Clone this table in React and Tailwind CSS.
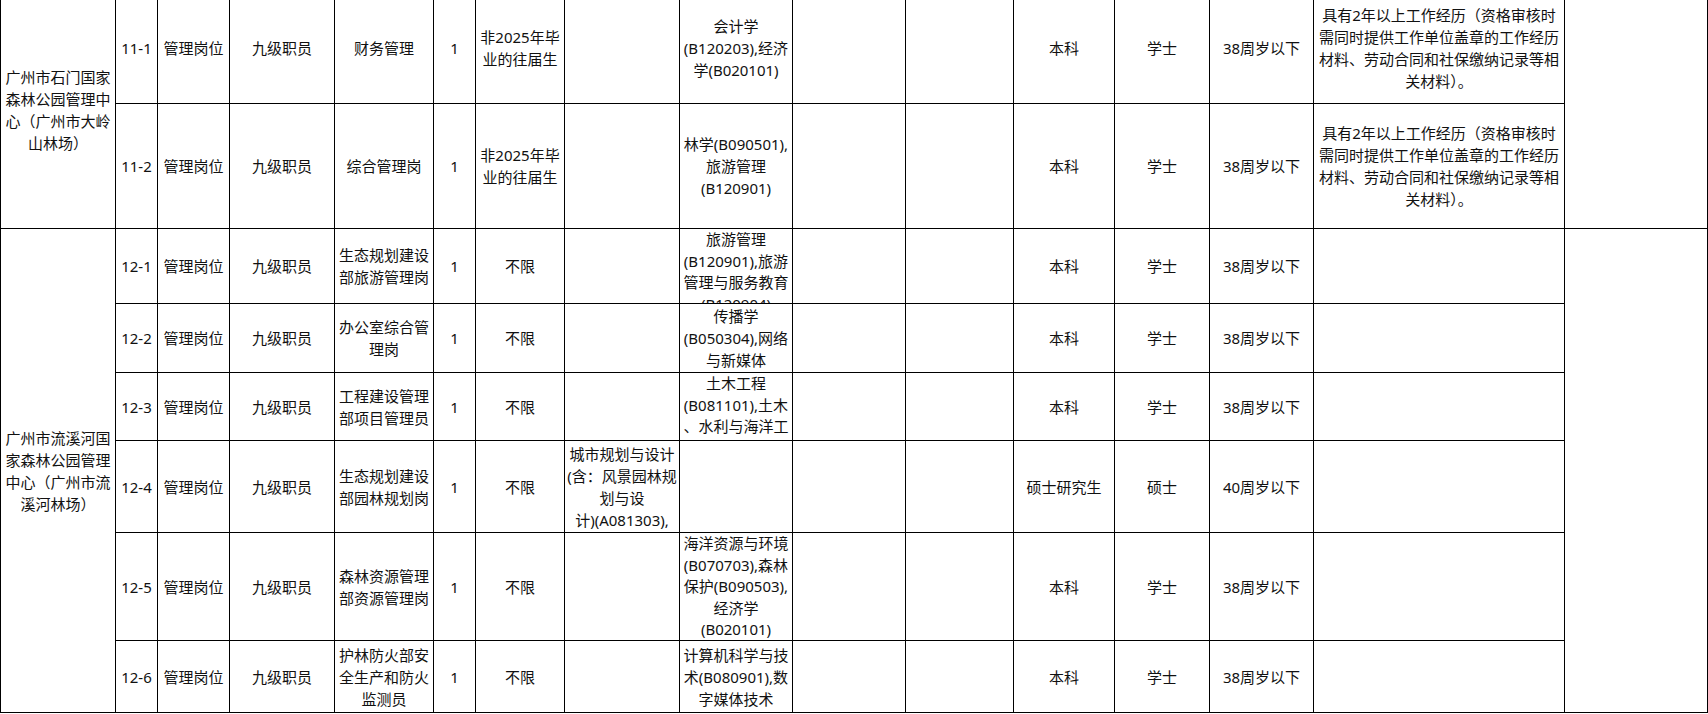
const REMARK = [
  "具有2年以上工作经历（资格审核时",
  "需同时提供工作单位盖章的工作经历",
  "材料、劳动合同和社保缴纳记录等相",
  "关材料）。",
];

const rows = [
  {
    code: "11-1",
    post: ["财务管理"],
    target: ["非2025年毕", "业的往届生"],
    grad: [],
    major: ["会计学", "(B120203),经济", "学(B020101)"],
    edu: "本科",
    degree: "学士",
    age: "38周岁以下",
    remark: REMARK,
  },
  {
    code: "11-2",
    post: ["综合管理岗"],
    target: ["非2025年毕", "业的往届生"],
    grad: [],
    major: ["林学(B090501),", "旅游管理", "(B120901)"],
    edu: "本科",
    degree: "学士",
    age: "38周岁以下",
    remark: REMARK,
  },
  {
    code: "12-1",
    post: ["生态规划建设", "部旅游管理岗"],
    target: ["不限"],
    grad: [],
    major: ["旅游管理", "(B120901),旅游", "管理与服务教育", "(B120904)"],
    top: true,
    edu: "本科",
    degree: "学士",
    age: "38周岁以下",
    remark: [],
  },
  {
    code: "12-2",
    post: ["办公室综合管", "理岗"],
    target: ["不限"],
    grad: [],
    major: ["传播学", "(B050304),网络", "与新媒体"],
    edu: "本科",
    degree: "学士",
    age: "38周岁以下",
    remark: [],
  },
  {
    code: "12-3",
    post: ["工程建设管理", "部项目管理员"],
    target: ["不限"],
    grad: [],
    major: ["土木工程", "(B081101),土木", "、水利与海洋工"],
    top: true,
    edu: "本科",
    degree: "学士",
    age: "38周岁以下",
    remark: [],
  },
  {
    code: "12-4",
    post: ["生态规划建设", "部园林规划岗"],
    target: ["不限"],
    grad: ["城市规划与设计", "(含：风景园林规", "划与设", "计)(A081303),"],
    major: [],
    edu: "硕士研究生",
    degree: "硕士",
    age: "40周岁以下",
    remark: [],
  },
  {
    code: "12-5",
    post: ["森林资源管理", "部资源管理岗"],
    target: ["不限"],
    grad: [],
    major: ["海洋资源与环境", "(B070703),森林", "保护(B090503),", "经济学", "(B020101)"],
    top: true,
    edu: "本科",
    degree: "学士",
    age: "38周岁以下",
    remark: [],
  },
  {
    code: "12-6",
    post: ["护林防火部安", "全生产和防火", "监测员"],
    target: ["不限"],
    grad: [],
    major: ["计算机科学与技", "术(B080901),数", "字媒体技术"],
    edu: "本科",
    degree: "学士",
    age: "38周岁以下",
    remark: [],
  },
];

// one table cell; lines are broken by hand the way the sheet shows them
const Cell = ({ lines = [], top = false, className = "" }) => (
  <div
    className={`bg-white overflow-hidden flex flex-col items-center text-center ${
      top ? "justify-start" : "justify-center"
    } ${className}`}
  >
    {lines.map((l, i) => (
      <div
        key={i}
        className={`whitespace-nowrap ${top ? "leading-[21.5px]" : "leading-[22px]"}`}
      >
        {l}
      </div>
    ))}
  </div>
);

export default function App() {
  return (
    <div className="w-[1708px] h-[714px] overflow-hidden bg-white">
      <div
        className="-mt-[9px] grid gap-px p-px bg-black text-[15px] text-[#111] grid-cols-[114px_41px_71px_104px_98px_41px_88px_114px_112px_112px_107px_100px_94px_103px_250px_142px] grid-rows-[111px_124px_74px_68px_67px_91px_107px_71px]"
        style={{ fontFamily: '"Noto Sans", "Noto Sans CJK SC", sans-serif' }}
      >
        {rows.map((r, i) => (
          <Row key={r.code} r={r} first={i === 0} third={i === 2} />
        ))}
      </div>
    </div>
  );
}

function Row({ r, first, third }) {
  return (
    <>
      {first && (
        <Cell
          className="row-span-2"
          lines={["广州市石门国家", "森林公园管理中", "心（广州市大岭", "山林场）"]}
        />
      )}
      {third && (
        <Cell
          className="row-span-6"
          lines={["广州市流溪河国", "家森林公园管理", "中心（广州市流", "溪河林场）"]}
        />
      )}
      <Cell lines={[r.code]} />
      <Cell lines={["管理岗位"]} />
      <Cell lines={["九级职员"]} />
      <Cell lines={r.post} />
      <Cell lines={["1"]} />
      <Cell lines={r.target} />
      <Cell lines={r.grad} />
      <Cell lines={r.major} top={r.top} />
      <Cell />
      <Cell />
      <Cell lines={[r.edu]} />
      <Cell lines={[r.degree]} />
      <Cell lines={[r.age]} />
      <Cell lines={r.remark} />
      {first && <Cell className="row-span-2" />}
      {third && <Cell className="row-span-6" />}
    </>
  );
}
